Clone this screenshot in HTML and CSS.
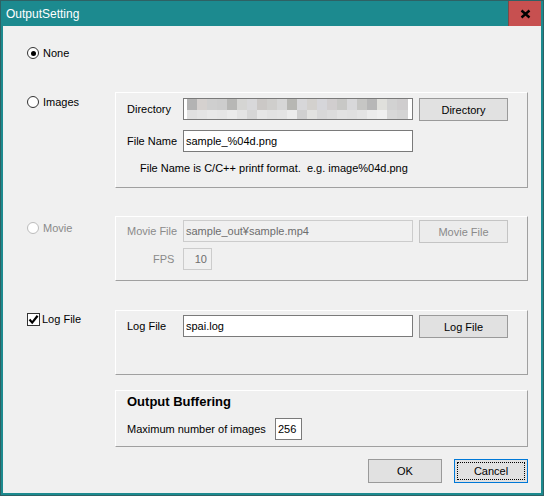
FILE: index.html
```html
<!DOCTYPE html>
<html>
  <head>
    <meta charset="utf-8">
    <title>OutputSetting</title>
    <link rel="stylesheet" href="styles.css">
  </head>

  <body>
    <div class="window">
      <div class="titlebar">
        <span class="title">OutputSetting</span>
        <div class="close">
          <svg width="11" height="10" viewBox="0 0 11 10">
            <path d="M1.5 1.5 L9.5 8.5 M9.5 1.5 L1.5 8.5" stroke="#000" stroke-width="2.4" />
          </svg>
        </div>
      </div>

      <div class="client">
        <div class="row row-none">
          <label class="option"><span class="radio checked"></span>None</label>
        </div>

        <div class="row row-images">
          <label class="option"><span class="radio"></span>Images</label>
          <div class="group group-images">
            <div class="field">
              <span class="label">Directory</span>
              <div class="text mosaic"></div>
              <button class="btn">Directory</button>
            </div>
            <div class="field">
              <span class="label">File Name</span>
              <input class="text" type="text" value="sample_%04d.png">
            </div>
            <div class="hint">File Name is C/C++ printf format.  e.g. image%04d.png</div>
          </div>
        </div>

        <div class="row row-movie disabled">
          <label class="option"><span class="radio"></span>Movie</label>
          <div class="group group-movie">
            <div class="field">
              <span class="label">Movie File</span>
              <input class="text" type="text" value="sample_out¥sample.mp4" disabled>
              <button class="btn" disabled>Movie File</button>
            </div>
            <div class="field">
              <span class="label label-fps">FPS</span>
              <input class="text fps" type="text" value="10" disabled>
            </div>
          </div>
        </div>

        <div class="row row-log">
          <label class="option">
            <span class="check">
              <svg width="11" height="11" viewBox="0 0 11 11">
                <path d="M1.5 5.5 L4.2 8.6 L9.6 1.8" fill="none" stroke="#000" stroke-width="2.2" />
              </svg>
            </span>Log File
          </label>
          <div class="group group-log">
            <div class="field">
              <span class="label">Log File</span>
              <input class="text" type="text" value="spai.log">
              <button class="btn">Log File</button>
            </div>
          </div>
        </div>

        <div class="row row-buffer">
          <div class="group group-buffer">
            <div class="group-title">Output Buffering</div>
            <div class="field">
              <span class="label label-wide">Maximum number of images</span>
              <input class="text count" type="text" value="256">
            </div>
          </div>
        </div>

        <div class="actions">
          <button class="btn btn-action">OK</button>
          <button class="btn btn-action focused"><span>Cancel</span></button>
        </div>
      </div>
    </div>
  </body>
</html>
```

FILE: styles.css
```css
* {
  box-sizing: border-box;
}

body {
  margin: 0;
  font-family: "Liberation Sans", Arial, sans-serif;
  font-size: 11px;
  color: #000;
}

.window {
  width: 544px;
  height: 496px;
  border: 1px solid #2e6164;
  background: #1c8a8f;
  padding: 0 2px 2px;
  display: flex;
  flex-direction: column;
}

.titlebar {
  height: 25px;
  display: flex;
  align-items: center;
  color: #fff;
  font-size: 12px;
}

.title {
  padding-left: 3px;
}

.close {
  margin-left: auto;
  align-self: flex-start;
  width: 33px;
  height: 25px;
  background: #c75050;
  border-left: 1px solid #7a4a48;
  display: flex;
  align-items: center;
  justify-content: center;
}

.client {
  flex: 1;
  background: #f0f0f0;
  padding: 20px 0 0 24px;
}

.row {
  display: flex;
  align-items: flex-start;
}

.option {
  width: 88px;
  height: 14px;
  line-height: 14px;
  display: flex;
  align-items: center;
}

.radio {
  position: relative;
  width: 12px;
  height: 12px;
  margin-right: 4px;
  border: 1px solid #333;
  border-radius: 50%;
  background: #fff;
}

.radio.checked::after {
  content: "";
  position: absolute;
  left: 2.5px;
  top: 2.5px;
  width: 5px;
  height: 5px;
  border-radius: 50%;
  background: #000;
}

.check {
  width: 13px;
  height: 13px;
  margin-right: 2px;
  border: 1px solid #333;
  background: #fff;
  display: flex;
  align-items: center;
  justify-content: center;
}

.row-images {
  margin-top: 32px;
}

.row-images .option {
  margin-top: 3px;
}

.row-movie {
  margin-top: 28px;
}

.row-movie .option {
  margin-top: 5px;
}

.row-log {
  margin-top: 29px;
}

.row-log .option {
  margin-top: 2px;
}

.row-buffer {
  margin-top: 15px;
  padding-left: 88px;
}

.group {
  width: 413px;
  border-top: 1px solid #fff;
  border-left: 1px solid #fff;
  border-right: 1px solid #a0a0a0;
  border-bottom: 1px solid #a0a0a0;
  padding-left: 11px;
}

.group-images {
  padding-top: 5px;
  padding-bottom: 12px;
}

.group-images .field + .field {
  margin-top: 9px;
}

.group-movie {
  padding-top: 3px;
  padding-bottom: 10px;
}

.group-movie .field + .field {
  margin-top: 5px;
}

.group-log {
  padding-top: 4px;
  padding-bottom: 36px;
}

.group-buffer {
  padding-top: 3px;
  padding-bottom: 6px;
}

.group-title {
  font-size: 13px;
  font-weight: bold;
  line-height: 16px;
  margin-bottom: 8px;
}

.field {
  display: flex;
  align-items: flex-start;
}

.label {
  width: 56px;
  line-height: 22px;
}

.label-fps {
  padding-left: 26px;
}

.label-wide {
  width: 148px;
}

.text {
  width: 230px;
  height: 22px;
  padding: 0 2px;
  border: 1px solid #7a7a7a;
  background: #fff;
  font: inherit;
  color: #000;
  outline: none;
}

.text:disabled {
  border-color: #cccccc;
  background: #f0f0f0;
  color: #6d6d6d;
}

.fps {
  width: 29px;
  text-align: right;
  padding-right: 4px;
}

.count {
  width: 27px;
}

/* blurred directory path */
.mosaic {
  background-color: #fff;
  background-image:
    linear-gradient(to right,
      #b3b3b3 0 10px, #d5d1cf 10px 20px, #cfcfcf 20px 30px, #cdcdcd 30px 40px,
      #b7b7b5 40px 50px, #d5d5d3 50px 60px, #d8d8da 60px 70px, #cbc8c6 70px 80px,
      #cfcecc 80px 90px, #d6d6d6 90px 100px, #b7b7b3 100px 110px, #d7d7d9 110px 120px,
      #d3d1ce 120px 130px, #d6d6da 130px 140px, #d1cecf 140px 150px, #c8c8c6 150px 160px,
      #d8d8da 160px 170px, #c6c6c4 170px 180px, #b7b7b7 180px 190px, #e0e0dc 190px 200px,
      #d2d2d2 200px 210px, #cfcdce 210px 221px),
    linear-gradient(to right,
      #e0e0e0 0 10px, #e4e4e4 10px 20px, #e8e8e8 20px 30px, #e6e6e6 30px 40px,
      #ebebeb 40px 50px, #e3e3e3 50px 60px, #d6d6d6 60px 70px, #e6e6e6 70px 80px,
      #e2e2e2 80px 90px, #e4e4e4 90px 100px, #ececec 100px 110px, #d0d0d0 110px 120px,
      #e2e2e0 120px 130px, #d8d8d8 130px 140px, #dcdcdc 140px 150px, #e2e2e2 150px 160px,
      #e0e0e0 160px 170px, #e4e4e4 170px 180px, #ececec 180px 190px, #f0f0f0 190px 200px,
      #d8d8d8 200px 210px, #d4d4d4 210px 221px);
  background-size: 221px 11px, 221px 9px;
  background-position: 3px 0, 3px 11px;
  background-repeat: no-repeat;
}

.hint {
  margin-top: 9px;
  padding-left: 13px;
  line-height: 14px;
  white-space: pre;
}

.btn {
  width: 89px;
  height: 23px;
  margin-left: 6px;
  padding: 0;
  border: 1px solid #9a9a9a;
  background: #e1e1e1;
  font: inherit;
  color: #000;
}

.btn:disabled {
  border-color: #c4c4c4;
  background: #ececec;
  color: #8a8a8a;
}

.disabled .option,
.disabled .label {
  color: #8a8a8a;
}

.disabled .radio {
  border-color: #bcbcbc;
}

.actions {
  margin-top: 12px;
  margin-left: 88px;
  width: 413px;
  display: flex;
  justify-content: flex-end;
}

.btn-action {
  width: 74px;
  height: 24px;
  margin-left: 12px;
}

.focused {
  border-color: #0078d7;
  padding: 2px;
}

.focused span {
  display: flex;
  align-items: center;
  justify-content: center;
  height: 100%;
  border: 1px dotted #000;
}
```
